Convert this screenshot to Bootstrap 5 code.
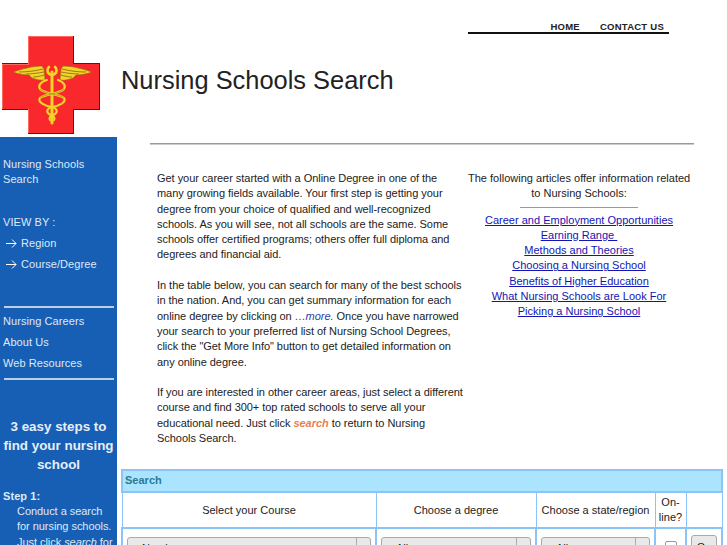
<!DOCTYPE html>
<html lang="en">
<head>
  <meta charset="UTF-8" />
  <meta name="viewport" content="width=device-width, initial-scale=1" />
  <title>Nursing Schools Search</title>
  <link href="https://cdn.jsdelivr.net/npm/bootstrap@5.3.3/dist/css/bootstrap.min.css" rel="stylesheet" />
  <style>
    html, body { height: 545px; overflow: hidden; }
    body { font-family: "Liberation Sans", Arial, sans-serif; font-size: 11px; line-height: 15.3px; letter-spacing: .01px; color: #222; background: #fff; }
    .top-links { width: 201px; height: 34px; margin-left: 468px; padding-top: 20px; padding-right: 5px; border-bottom: 2px solid #111; gap: 20px; font-size: 9.5px; line-height: 13px; font-weight: 700; letter-spacing: .25px; }
    .top-links a { color: #222; text-decoration: none; }
    .head-row { height: 103px; }
    .logo-svg { width: 98px; height: 98px; margin: 2px 0 0 2px; flex: none; }
    .site-title { font-size: 25.4px; line-height: 30px; font-weight: 400; color: #222; margin: 31px 0 0 21px; }
    .side { width: 117px; height: 408px; background: #175fb4; color: #dfe9f5; letter-spacing: .08px; padding: 20px 3px 0 3px; flex: none; }
    .side a { color: #dfe9f5; text-decoration: none; }
    .side-title { line-height: 15px; margin-bottom: 25px; }
    .side-row { line-height: 20.8px; display: block; white-space: nowrap; }
    .side-arrow { padding-left: 3px; }
    .side-arrow svg { width: 11px; height: 9px; margin-right: 4px; vertical-align: -1px; }
    .side-line { height: 2px; background: #bccfe6; margin-left: 1px; }
    .side-line-a { margin-top: 32px; margin-bottom: 3px; }
    .side-line-b { margin-top: 4px; }
    .side-head { font-size: 13.4px; line-height: 19px; font-weight: 700; text-align: center; margin: 37px -3px 15px; letter-spacing: 0; color: #e6eef8; white-space: nowrap; }
    .side-step { font-weight: 700; margin: 0; }
    .side-text { padding-left: 14px; margin: 0; white-space: nowrap; letter-spacing: -.05px; }
    .content { padding-left: 4px; min-width: 0; flex: 1; }
    .rule { height: 1px; background: #999; border-bottom: 1px solid #ccc; margin: 6px 33px 0 29px; box-sizing: content-box; }
    .intro { padding: 26px 0 0 36px; height: 324px; }
    .intro-left { width: 311px; flex: none; letter-spacing: -.04px; }
    .intro-left p { margin: 0 0 15.3px; white-space: nowrap; }
    .intro-right { width: 222px; text-align: center; white-space: nowrap; }
    .intro-right a { color: #1414b4; display: block; }
    .intro-rule { width: 118px; height: 1px; background: #999; margin: 5px auto 5px; }
    .more-link { color: #2a45a8; font-style: italic; text-decoration: none; }
    .search-link { color: #e8804e; font-weight: 700; font-style: italic; text-decoration: none; }
    .search-tbl { width: 602px; table-layout: fixed; border-collapse: collapse; }
    .search-tbl td { border: 2px solid #8cc4f8; text-align: center; padding: 0; font-weight: 400; vertical-align: middle; }
    .search-tbl .tbl-title { background: #aae4ff; color: #2a7a94; font-weight: 700; text-align: left; height: 22px; padding-left: 2px; }
    .search-tbl .tbl-heads td { height: 36px; line-height: 15px; border-width: 1px; border-bottom-width: 2px; }
    .search-tbl .tbl-inputs td { height: 30px; vertical-align: top; }
    .fake-select { height: 22px; margin: 8px 4px 0; border: 1px solid #aaa; border-radius: 3px; background: #e9e9e9; text-align: left; padding: 3px 0 0 14px; position: relative; }
    .fake-select::after { content: ""; position: absolute; right: 0; top: 0; bottom: 0; width: 14px; border-left: 1px solid #aaa; }
    .fake-box { display: inline-block; width: 12px; height: 12px; border: 1px solid #999; border-radius: 2px; background: #fff; margin-top: 12px; }
    .go-btn { height: 24px; width: 26px; margin-top: 6px; padding: 0; border: 1px solid #aaa; border-radius: 3px; background: #e9e9e9; font-size: 11px; line-height: 15px; color: #222; }
  </style>
</head>
<body>
  <div class="top-links d-flex justify-content-end">
    <a href="#">HOME</a>
    <a href="#">CONTACT US</a>
  </div>

  <div class="head-row d-flex align-items-start">
    <svg class="logo-svg" viewBox="0 0 98 98" aria-hidden="true">
      <path d="M26 0H72V27H98V74H72V98H26V74H0V27H26Z" fill="#6e0c10"/>
      <path d="M26 0H71V28H97V73H71V97H26V73H0V28H26Z" fill="#ff6a5e"/>
      <path d="M27 1H71V28H97V73H71V97H27V73H1V29H27Z" fill="#f9282c"/>
      <g fill="#f0d428" stroke="#8f6a10" stroke-width=".6" stroke-linejoin="round">
        <path d="M11 36C20 33 30 30 40 30L42 33L43 44C38 45 33 43 30 42L27 39C22 39 16 38 11 36Z"/>
        <path d="M90 36C81 33 71 30 61 30L59 33L58 44C63 45 68 43 71 42L74 39C79 39 85 38 90 36Z"/>
      </g>
      <g fill="none" stroke="#a8761a" stroke-width="1">
        <path d="M17 36C25 36 33 35 41 33M24 38C30 38 36 37 42 36M31 41C35 41 39 40 42 39"/>
        <path d="M84 36C76 36 68 35 60 33M77 38C71 38 65 37 59 36M70 41C66 41 62 40 59 39"/>
      </g>
      <g fill="none" stroke="#f0d428" stroke-linecap="round" stroke-width="2.2">
        <path d="M50 36V87" stroke-width="3"/>
        <path d="M47 31a4.5 4.5 0 1 0 6 0" stroke-width="2.6"/>
        <path d="M45 44C38 46 36 50 38 53C42 58 58 58 62 62C65 66 57 70 50 71C45 72 44 76 47 78C50 80 54 81 52 84"/>
        <path d="M56 44C62 46 64 50 62 53C58 58 42 58 38 62C35 66 43 70 50 71C55 72 56 76 53 78C50 80 46 81 48 84"/>
      </g>
      <g fill="none" stroke="#8f6a10" stroke-width=".5">
        <path d="M38 53C42 58 58 58 62 62M62 53C58 58 42 58 38 62"/>
      </g>
    </svg>
    <h1 class="site-title">Nursing Schools Search</h1>
  </div>

  <div class="d-flex">
    <div class="side">
      <div class="side-title">Nursing Schools<br />Search</div>
      <div class="side-row">VIEW BY :</div>
      <a class="side-row side-arrow" href="#"><svg viewBox="0 0 11 9" aria-hidden="true"><path d="M0 4.5H10M6 .5L10 4.5L6 8.5" fill="none" stroke="#fff" stroke-width="1"/></svg>Region</a>
      <a class="side-row side-arrow" href="#"><svg viewBox="0 0 11 9" aria-hidden="true"><path d="M0 4.5H10M6 .5L10 4.5L6 8.5" fill="none" stroke="#fff" stroke-width="1"/></svg>Course/Degree</a>
      <div class="side-line side-line-a"></div>
      <a class="side-row" href="#">Nursing Careers</a>
      <a class="side-row" href="#">About Us</a>
      <a class="side-row" href="#">Web Resources</a>
      <div class="side-line side-line-b"></div>
      <div class="side-head">3 easy steps to<br />find your nursing<br />school</div>
      <p class="side-step">Step 1:</p>
      <p class="side-text">Conduct a search<br />for nursing schools.<br />Just click <i>search</i> for</p>
    </div>

    <div class="content">
      <div class="rule"></div>
      <div class="intro d-flex">
        <div class="intro-left">
          <p>Get your career started with a Online Degree in one of the<br />many growing fields available. Your first step is getting your<br />degree from your choice of qualified and well-recognized<br />schools. As you will see, not all schools are the same. Some<br />schools offer certified programs; others offer full diploma and<br />degrees and financial aid.</p>
          <p>In the table below, you can search for many of the best schools<br />in the nation. And, you can get summary information for each<br />online degree by clicking on <a class="more-link" href="#">…more.</a> Once you have narrowed<br />your search to your preferred list of Nursing School Degrees,<br />click the "Get More Info" button to get detailed information on<br />any online degree.</p>
          <p>If you are interested in other career areas, just select a different<br />course and find 300+ top rated schools to serve all your<br />educational need. Just click <a class="search-link" href="#">search</a> to return to Nursing<br />Schools Search.</p>
        </div>
        <div class="intro-right">
          <div>The following articles offer information related<br />to Nursing Schools:</div>
          <div class="intro-rule"></div>
          <a href="#">Career and Employment Opportunities</a>
          <a href="#">Earning Range&nbsp;</a>
          <a href="#">Methods and Theories</a>
          <a href="#">Choosing a Nursing School</a>
          <a href="#">Benefits of Higher Education</a>
          <a href="#">What Nursing Schools are Look For</a>
          <a href="#">Picking a Nursing School</a>
        </div>
      </div>

      <table class="search-tbl">
        <colgroup>
          <col style="width: 254px" /><col style="width: 160px" /><col style="width: 119px" /><col style="width: 31px" /><col />
        </colgroup>
        <tr><td class="tbl-title" colspan="5">Search</td></tr>
        <tr class="tbl-heads">
          <td>Select your Course</td>
          <td>Choose a degree</td>
          <td>Choose a state/region</td>
          <td>On-<br />line?</td>
          <td></td>
        </tr>
        <tr class="tbl-inputs">
          <td><div class="fake-select">Nursing</div></td>
          <td><div class="fake-select">All</div></td>
          <td><div class="fake-select">All</div></td>
          <td><span class="fake-box"></span></td>
          <td><button class="go-btn" type="button">Go</button></td>
        </tr>
      </table>
    </div>
  </div>

  <script src="https://cdn.jsdelivr.net/npm/bootstrap@5.3.3/dist/js/bootstrap.bundle.min.js"></script>
</body>
</html>
